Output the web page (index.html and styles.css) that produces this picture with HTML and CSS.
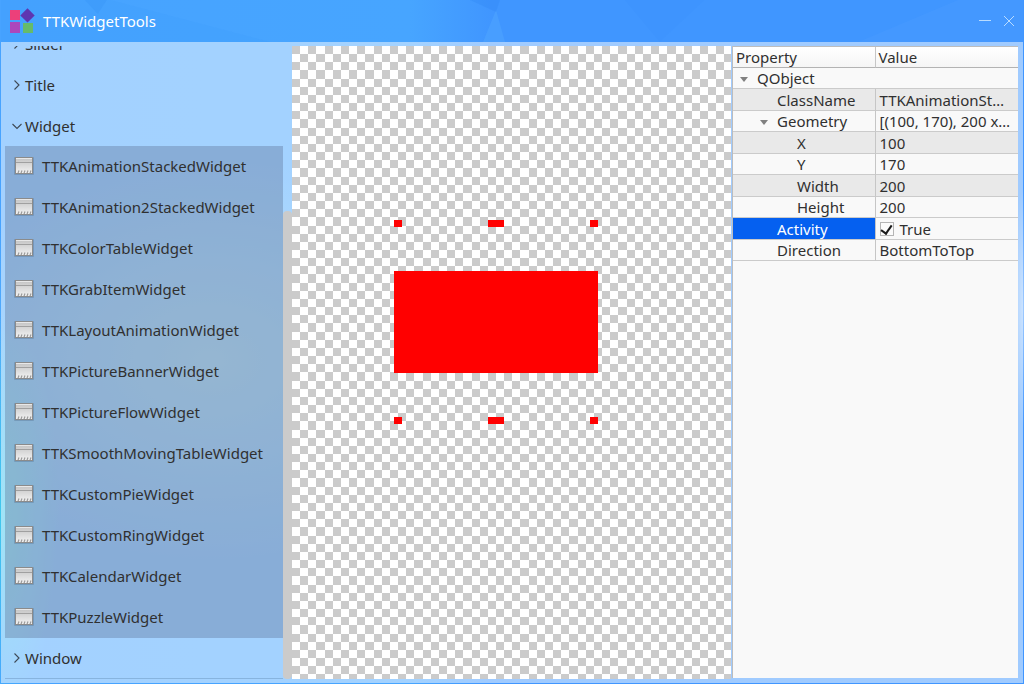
FILE: index.html
```
<!DOCTYPE html>
<html lang="en">
<head>
<meta charset="utf-8">
<meta name="viewport" content="width=device-width, initial-scale=1">
<title>TTKWidgetTools</title>
<link rel="stylesheet" href="styles.css">
</head>
<body>
<svg class="symbols" aria-hidden="true">
  <defs>
    <linearGradient id="face" x1="0" y1="0" x2="0" y2="1"><stop offset="0" stop-color="#c4c4c4"/><stop offset="1" stop-color="#f2f2f2"/></linearGradient>
  </defs>
  <symbol id="widget" viewBox="0 0 20 20">
    <rect x="0" y="1" width="20" height="18" rx="1" fill="#5f7fa0" opacity=".5"/>
    <rect x="1" y="1" width="18" height="17" fill="#8b8b8b"/>
    <rect x="2" y="2" width="16" height="15" fill="url(#face)"/>
    <path d="M2 2.500h16" stroke="#e8e8e8"/>
    <path d="M2 6.500h16" stroke="#a0a0a0"/>
    <path d="M4 17l1-2.500M7 17l1-2.500M10 17l1-2.500M13 17l1-2.500M16 17l1-2.500" stroke="#999" stroke-width="1.200"/>
  </symbol>
  <symbol id="closed" viewBox="0 0 10 10"><path d="M2.500 .5l4.500 4.500-4.500 4.500" fill="none" stroke="#3d4854" stroke-width="1.100"/></symbol>
  <symbol id="open" viewBox="0 0 10 10"><path d="M.5 3l4.500 4.500 4.500-4.500" fill="none" stroke="#3d4854" stroke-width="1.100"/></symbol>
</svg>
<div class="window">
  <header class="titlebar">
    <svg class="facets" viewBox="0 0 1024 42" preserveAspectRatio="none" aria-hidden="true">
      <path d="M0 0h110L270 42H0z" fill="#2f8ff5" opacity=".1"/>
      <path d="M84 0h22l-9 14z" fill="#2080e8" opacity=".14"/>
      <path d="M470 0h30l-4 12z" fill="#1f78e8" opacity=".16"/>
      <path d="M496 10l9 32h-22z" fill="#5fb8ff" opacity=".25"/>
      <path d="M625 0h80l-45 42z" fill="#1e7df0" opacity=".06"/>
      <path d="M1024 0h-65l-100 42h165z" fill="#6cb4ff" opacity=".1"/>
    </svg>
    <svg class="logo" viewBox="0 0 26 26" aria-hidden="true">
      <path d="M2 2h10v10H2z" fill="#ec407a"/><path d="M19.500 .2l7.200 7.200-7.200 7.200-7.200-7.200z" fill="#5e35b1"/>
      <path d="M2 14h10v11H2z" fill="#ab47bc"/><path d="M15 15h10v10H15z" fill="#66bb6a"/>
    </svg>
    <h1 class="title">TTKWidgetTools</h1>
    <button class="control" aria-label="Minimize"><svg viewBox="0 0 14 14"><path d="M1 6.500h12"/></svg></button>
    <button class="control" aria-label="Close"><svg viewBox="0 0 14 14"><path d="M2 2l10 10M12 2L2 12"/></svg></button>
  </header>
  <main class="content">
    <nav class="sidebar" aria-label="Widgets">
      <button class="group"><svg><use href="#closed"/></svg>Slider</button>
      <button class="group"><svg><use href="#closed"/></svg>Title</button>
      <button class="group" aria-expanded="true"><svg><use href="#open"/></svg>Widget</button>
      <div class="items">
        <button class="item"><svg><use href="#widget"/></svg>TTKAnimationStackedWidget</button>
        <button class="item"><svg><use href="#widget"/></svg>TTKAnimation2StackedWidget</button>
        <button class="item"><svg><use href="#widget"/></svg>TTKColorTableWidget</button>
        <button class="item"><svg><use href="#widget"/></svg>TTKGrabItemWidget</button>
        <button class="item"><svg><use href="#widget"/></svg>TTKLayoutAnimationWidget</button>
        <button class="item"><svg><use href="#widget"/></svg>TTKPictureBannerWidget</button>
        <button class="item"><svg><use href="#widget"/></svg>TTKPictureFlowWidget</button>
        <button class="item"><svg><use href="#widget"/></svg>TTKSmoothMovingTableWidget</button>
        <button class="item"><svg><use href="#widget"/></svg>TTKCustomPieWidget</button>
        <button class="item"><svg><use href="#widget"/></svg>TTKCustomRingWidget</button>
        <button class="item"><svg><use href="#widget"/></svg>TTKCalendarWidget</button>
        <button class="item"><svg><use href="#widget"/></svg>TTKPuzzleWidget</button>
      </div>
      <button class="group last"><svg><use href="#closed"/></svg>Window</button>
    </nav>
    <div class="scrollbar"><div class="thumb"></div></div>
    <section class="canvas" aria-label="Preview">
      <div class="preview">
        <div class="marks"><i></i><i class="wide"></i><i></i></div>
        <div class="block"></div>
        <div class="marks"><i></i><i class="wide"></i><i></i></div>
      </div>
    </section>
    <section class="properties">
      <table>
        <thead><tr><th>Property</th><th>Value</th></tr></thead>
        <tbody>
          <tr><td colspan="2" class="root"><svg class="arrow" viewBox="0 0 8 5"><path d="M0 0h8L4 5z"/></svg>QObject</td></tr>
          <tr class="shade"><td class="level1">ClassName</td><td>TTKAnimationSt…</td></tr>
          <tr><td class="branch"><svg class="arrow" viewBox="0 0 8 5"><path d="M0 0h8L4 5z"/></svg>Geometry</td><td>[(100, 170), 200 x…</td></tr>
          <tr class="shade"><td class="level2">X</td><td>100</td></tr>
          <tr><td class="level2">Y</td><td>170</td></tr>
          <tr class="shade"><td class="level2">Width</td><td>200</td></tr>
          <tr><td class="level2">Height</td><td>200</td></tr>
          <tr class="selected"><td class="level1">Activity</td><td><label class="check"><input type="checkbox" checked>True</label></td></tr>
          <tr><td class="level1">Direction</td><td>BottomToTop</td></tr>
        </tbody>
      </table>
    </section>
  </main>
</div>
</body>
</html>
```
FILE: styles.css
```
* { box-sizing: border-box; }
body { margin: 0; font: 15px/20px "Noto Sans", "Open Sans", sans-serif; color: #303030; }
button { font: inherit; color: inherit; background: none; border: 0; padding: 0; text-align: left; }
.symbols { position: absolute; width: 0; height: 0; }
.window {
  height: 100vh;
  display: flex;
  flex-direction: column;
  padding: 0 1px 1px;
  background:
    radial-gradient(ellipse 60px 200px at 0 75%, rgba(60, 225, 225, .6), transparent),
    radial-gradient(ellipse 12px 120px at 100% 45%, rgba(255, 255, 255, .5), transparent),
    radial-gradient(ellipse 280px 200px at 210px 360px, rgba(120, 200, 235, .7), transparent),
    linear-gradient(90deg, #47a3ff, #47a5ff 40%, #4096ff 48%, #4096ff);
}
.titlebar { position: relative; height: 42px; flex: none; display: flex; align-items: center; padding: 0 7px; }
.facets { position: absolute; inset: 0; width: 100%; height: 100%; }
.logo { position: relative; width: 26px; height: 26px; margin-right: 9px; overflow: visible; }
.title { position: relative; flex: 1; margin: 0; font-size: 15px; font-weight: 400; color: #fff; }
.control { position: relative; width: 14px; height: 14px; margin-left: 10px; }
.control svg { display: block; stroke: #b9dcff; fill: none; stroke-width: 1; }
.content { flex: 1; min-height: 0; display: flex; padding: 4px 5px 4px 4px; background: rgba(255, 255, 255, .5); }
.sidebar { flex: 0 0 278px; display: flex; flex-direction: column; justify-content: flex-end; overflow: hidden; }
.group { flex: none; height: 41px; display: flex; align-items: center; gap: 3px; padding-left: 7px; }
.group svg { width: 10px; height: 10px; }
.last { border-bottom: 1px solid #87b4df; }
.items { flex: none; display: flex; flex-direction: column; background: rgba(70, 80, 110, .28); }
.item { height: 41px; display: flex; align-items: center; gap: 8px; padding: 0 0 2px 9px; }
.item svg { width: 20px; height: 20px; }
.scrollbar { flex: 0 0 9px; display: flex; flex-direction: column; justify-content: flex-end; }
.thumb { height: 74%; background: #cbcbcb; border-radius: 4px; }
.canvas {
  --cell: calc(8px * 1.02);
  --pair: calc(16px * 1.02);
  position: relative;
  flex: 1;
  overflow: hidden;
  background:
    linear-gradient(#cbcbcb, #cbcbcb),
    repeating-linear-gradient(90deg, #fff 0 var(--cell), #000 var(--cell) var(--pair)),
    repeating-linear-gradient(180deg, #fff 0 var(--cell), #000 var(--cell) var(--pair));
  background-blend-mode: lighten, difference, normal;
}
.preview { position: absolute; left: 102px; top: 174px; width: 204px; height: 204px; display: flex; flex-direction: column; justify-content: space-between; }
.marks { display: flex; justify-content: space-between; }
.marks i { width: 8px; height: 7px; background: #f00; }
.marks .wide { width: 16px; }
.block { height: 102px; background: #f00; }
.properties { flex: 0 0 286px; margin-left: 1px; margin-bottom: 1px; border: solid #bdbdbd; border-width: 1px 0 0 1px; background: #f9f9f9; }
table { width: 100%; table-layout: fixed; border-collapse: separate; border-spacing: 0; }
th, td { padding: 0; height: 21px; line-height: 20px; text-align: left; white-space: nowrap; border-bottom: 1px solid #cbcbcb; }
th { font-weight: 400; padding-left: 3px; border-bottom-color: #b3b3b3; background: linear-gradient(#fff, #f5f5f5); }
th:first-child, td:first-child:not([colspan]) { border-right: 1px solid #c6c6c6; }
tbody tr:nth-child(even) td { height: 22px; }
td:last-child { padding-left: 4px; }
.shade td { background: #e9e9e9; }
td.root { padding-left: 7px; }
.branch { padding-left: 27px; }
.level1 { padding-left: 44px; }
.level2 { padding-left: 64px; }
.arrow { width: 8px; height: 5px; margin-right: 9px; vertical-align: middle; fill: #808080; }
.selected td:first-child { background: #0560f0; color: #fff; }
.check { display: flex; align-items: center; gap: 6px; }
.check input { appearance: none; width: 14px; height: 14px; margin: 0; border: 1px solid #b5b5b5; background: #fbfbfb; display: grid; place-items: center; }
.check input:checked::after { content: ""; width: 5px; height: 9px; border: solid #1a1a1a; border-width: 0 2px 2px 0; transform: rotate(35deg); }
```
